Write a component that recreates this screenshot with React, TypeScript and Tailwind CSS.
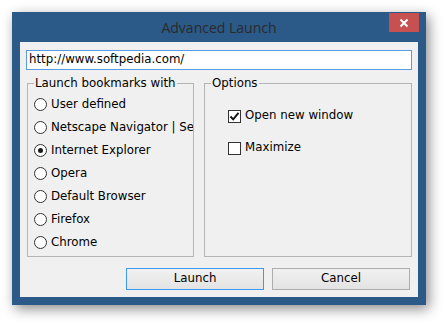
import React from "react";

const uiFont = { fontFamily: '"DejaVu Sans", Verdana, sans-serif' };

const browsers = [
  "User defined",
  "Netscape Navigator | Seamonkey",
  "Internet Explorer",
  "Opera",
  "Default Browser",
  "Firefox",
  "Chrome",
];

const Radio = ({ label, checked }: { label: string; checked?: boolean }) => (
  <div className="h-[23px] flex items-center gap-[4px] whitespace-nowrap">
    <span className="w-[13px] h-[13px] shrink-0 rounded-full border border-[#333333] bg-white flex items-center justify-center">
      {checked && <span className="w-[5px] h-[5px] rounded-full bg-[#1a1a1a]" />}
    </span>
    <span>{label}</span>
  </div>
);

const Check = ({ label, checked }: { label: string; checked?: boolean }) => (
  <div className="h-[20px] flex items-center gap-[4px] whitespace-nowrap">
    <span className="w-[13px] h-[13px] shrink-0 border border-[#333333] bg-white flex items-center justify-center">
      {checked && (
        <svg width="11" height="11" viewBox="0 0 11 11">
          <path d="M1.5 5.5 L4.2 8.3 L9.5 1.8" fill="none" stroke="#111" strokeWidth="1.9" />
        </svg>
      )}
    </span>
    <span>{label}</span>
  </div>
);

export default function App() {
  return (
    <div className="w-[446px] h-[326px] bg-white overflow-hidden pt-[12px] pl-[12px]">
      <div className="w-[414px] h-[293px] bg-[#2b5a88] flex flex-col shadow-[3px_4px_12px_rgba(0,0,0,0.45)]">
        {/* title bar */}
        <div className="h-[30px] grid grid-cols-[30px_1fr_30px] px-[7px] items-center">
          <span />
          <span
            className="text-center text-[14px] text-[#2a2a2a]"
            style={{ fontFamily: '"Open Sans", "Noto Sans", sans-serif' }}
          >
            Advanced Launch
          </span>
          <button className="self-start mt-[1px] h-[19px] w-[30px] bg-[#c75050] flex items-center justify-center">
            <svg width="10" height="10" viewBox="0 0 10 10">
              <path d="M1.5 1.5 L8.5 8.5 M8.5 1.5 L1.5 8.5" stroke="white" strokeWidth="2" />
            </svg>
          </button>
        </div>

        {/* client area */}
        <div
          className="flex-1 mx-[8px] mb-[8px] bg-[#f0f0f0] px-[6px] pt-[8px] text-[11.8px] text-black"
          style={uiFont}
        >
          <div className="h-[20px] border border-[#569de5] bg-white flex items-center pl-[2px]">
            http://www.softpedia.com/
          </div>

          <div className="flex gap-[10px] mt-[6px] pl-[1px]">
            <fieldset className="w-[167px] h-[181px] border border-[#b5b5b5] pl-[6px] pr-0 pt-[2px] overflow-hidden min-w-0">
              <legend className="px-[1px] leading-[15px]">Launch bookmarks with</legend>
              {browsers.map((b) => (
                <Radio key={b} label={b} checked={b === "Internet Explorer"} />
              ))}
            </fieldset>
            <fieldset className="flex-1 h-[181px] border border-[#b5b5b5] pl-[6px] pt-[15px] min-w-0">
              <legend className="px-[1px] leading-[15px]">Options</legend>
              <div className="pl-[17px] flex flex-col gap-[12px]">
                <Check label="Open new window" checked />
                <Check label="Maximize" />
              </div>
            </fieldset>
          </div>

          <div className="flex justify-end gap-[8px] pr-[2px] mt-[11px]">
            <button className="w-[138px] h-[22px] border border-[#3c99f0] bg-gradient-to-b from-[#f1f1f1] to-[#e3e3e3]">
              Launch
            </button>
            <button className="w-[138px] h-[22px] border border-[#adadad] bg-gradient-to-b from-[#f1f1f1] to-[#e3e3e3]">
              Cancel
            </button>
          </div>
        </div>
      </div>
    </div>
  );
}
